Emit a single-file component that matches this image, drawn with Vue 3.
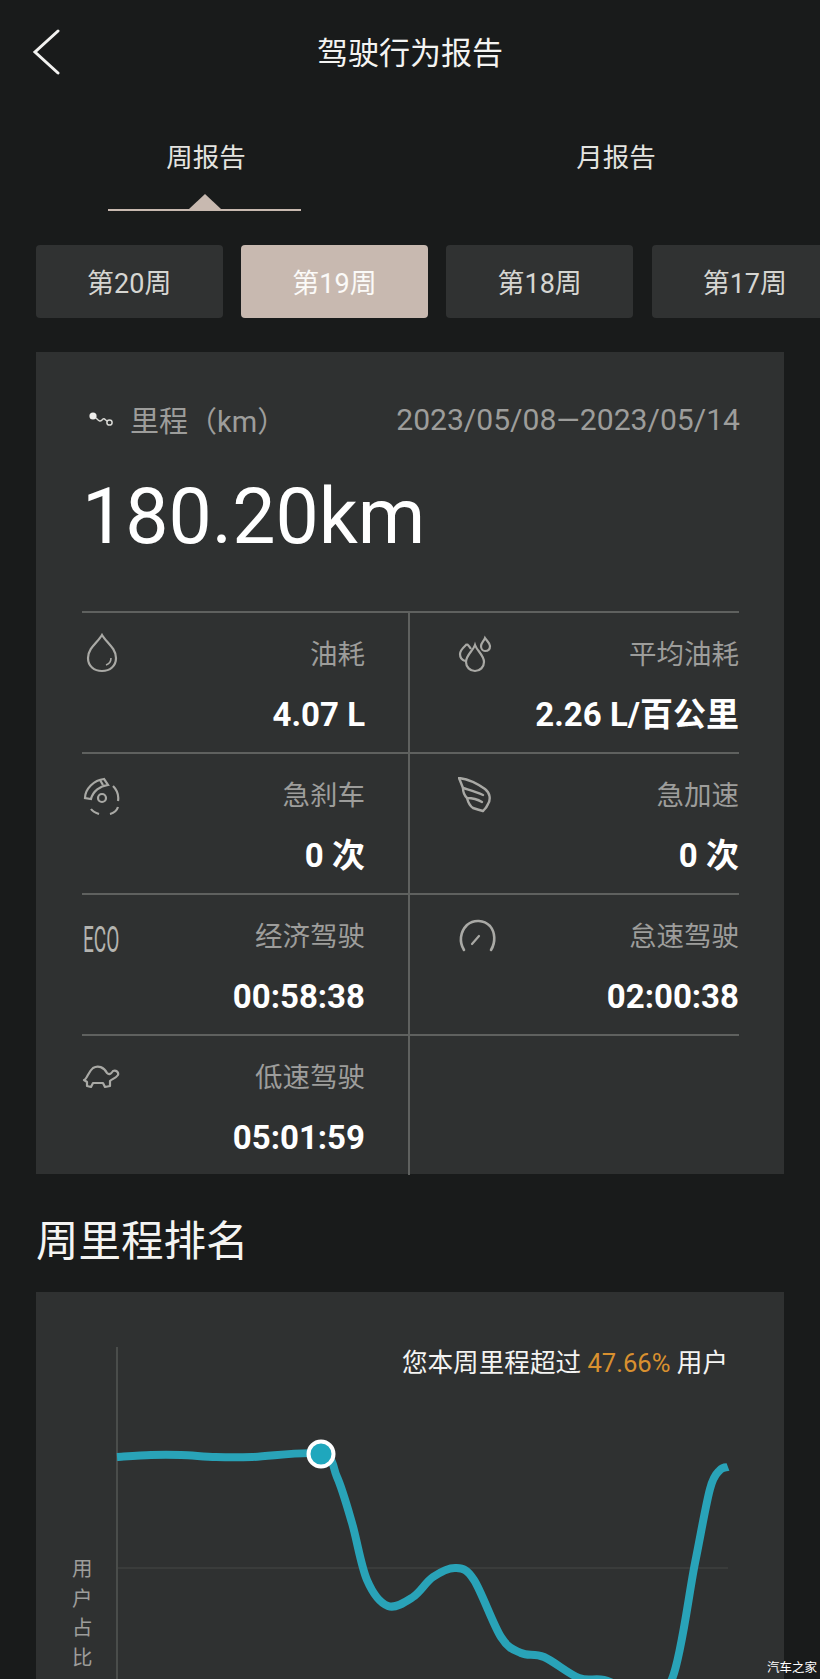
<template>
  <div class="page">
    <header class="top-bar">
      <svg class="back" width="28" height="46" viewBox="0 0 28 46">
        <path d="M26 2 L3 23 L26 44" fill="none" stroke="#f2f2f0" stroke-width="3" stroke-linecap="round" stroke-linejoin="miter" />
      </svg>
      <h1 class="title">驾驶行为报告</h1>
    </header>

    <nav class="tabs">
      <div class="tab active"><span>周报告</span></div>
      <div class="tab"><span>月报告</span></div>
    </nav>

    <div class="weeks">
      <div v-for="w in weeks" :key="w" class="week" :class="{ current: w === 19 }">第{{ w }}周</div>
    </div>

    <section class="card summary">
      <div class="summary-head">
        <div class="summary-label">
          <svg width="24" height="15" viewBox="0 0 24 15" class="route">
            <circle cx="4" cy="4" r="3.6" fill="#eeeeec" />
            <path d="M7 6 C10 9 11 10 13 8 C15 5 16 8 18 9" fill="none" stroke="#d8d8d4" stroke-width="1.5" />
            <circle cx="20.5" cy="10.5" r="2.6" fill="none" stroke="#d8d8d4" stroke-width="1.5" />
          </svg>
          <span>里程（km）</span>
        </div>
        <span class="date">2023/05/08—2023/05/14</span>
      </div>
      <div class="distance">180.20km</div>

      <div class="stats">
        <div v-for="s in stats" :key="s.label" class="stat">
          <div class="stat-icon" :class="'icon-' + s.icon">
            <span v-if="s.icon === 'eco'" class="eco">ECO</span>
            <svg v-else-if="s.icon === 'drop'" width="36" height="40" viewBox="0 0 36 40" fill="none" stroke="#a9a9a5" stroke-width="2.2">
              <path d="M18 2 C14 9 4 15 4 25 C4 33 10 38 18 38 C26 38 32 33 32 25 C32 15 22 9 18 2 Z" />
              <path d="M27 25 C27 28 25 31 22 32" stroke-width="1.6" />
            </svg>
            <svg v-else-if="s.icon === 'drops'" width="36" height="40" viewBox="0 0 36 40" fill="none" stroke="#a9a9a5" stroke-width="2.2">
              <path d="M17 12 C15 18 8 22 8 29 C8 34 12 38 17 38 C22 38 26 34 26 29 C26 22 19 18 17 12 Z" />
              <path d="M9 11 C6 14 2 17 2 21 C2 25 4 27 7 28 M9 11 C11 13 12 14 13 16" />
              <path d="M27 5 C26 8 23 10 23 13 C23 16 25 18 27 18 C30 18 32 16 32 13 C32 10 29 8 27 5 Z" />
            </svg>
            <svg v-else-if="s.icon === 'brake'" width="38" height="38" viewBox="0 0 38 38" fill="none" stroke="#a9a9a5" stroke-width="2.2">
              <circle cx="20" cy="21" r="4" />
              <path d="M9 32 C11 35 14 36 17 37" />
              <path d="M28 37 C32 36 35 33 36 30" />
              <path d="M36 24 C37 18 35 13 31 9" />
              <path d="M3 21 C3 12 12 3 22 2 L26 8 C18 9 11 14 9 22 Z" />
              <path d="M18 3 L21 8" />
            </svg>
            <svg v-else-if="s.icon === 'wing'" width="36" height="38" viewBox="0 0 36 38" fill="none" stroke="#a9a9a5" stroke-width="2.4" stroke-linejoin="round" stroke-linecap="round">
              <path d="M1 1 C10 2 20 7 27 12 C32 16 33 22 30 27 C29 30 27 32 25 34" />
              <path d="M1 1 L5 11 C11 13 18 15 25 18" />
              <path d="M5 11 C5 15 7 19 9 21 C14 21 19 22 24 25" />
              <path d="M9 21 C10 25 12 29 15 31 C18 32 21 33 25 34" />
            </svg>
            <svg v-else-if="s.icon === 'gauge'" width="38" height="34" viewBox="0 0 38 34" fill="none" stroke="#a9a9a5" stroke-width="2.6" stroke-linecap="round">
              <path d="M6 32 C1 24 2 14 9 7 C16 1 26 2 32 8 C37 14 38 24 33 32" />
              <path d="M14 26 L21 18" stroke-width="2.2" />
            </svg>
            <svg v-else-if="s.icon === 'turtle'" width="38" height="24" viewBox="0 0 38 24" fill="none" stroke="#a9a9a5" stroke-width="2.2" stroke-linejoin="round">
              <path d="M2 15 C5 14 6 7 11 3 C16 0 22 2 25 8 C27 10 29 9 31 6 C34 5 37 7 36 10 C34 13 30 14 28 16 L28 21 L23 22 L21 18 L11 18 L9 22 L5 21 L5 17 Z" />
            </svg>
          </div>
          <div class="stat-text">
            <div class="stat-label">{{ s.label }}</div>
            <div class="stat-value">{{ s.value }}</div>
          </div>
        </div>
        <div class="stat"></div>
      </div>
    </section>

    <h2 class="section-title">周里程排名</h2>

    <section class="card rank">
      <svg class="rank-chart" width="748" height="387" viewBox="0 0 748 387">
        <line x1="81" y1="55" x2="81" y2="387" stroke="#555755" stroke-width="1.5" />
        <line x1="82" y1="276" x2="692" y2="276" stroke="#474947" stroke-width="1" />
        <path :d="curve" fill="none" stroke="#29a3b8" stroke-width="8" stroke-linecap="butt" />
        <circle cx="285" cy="162" r="12.5" fill="#1fa7bd" stroke="#fff" stroke-width="4" />
      </svg>
      <p class="rank-note">您本周里程超过 <em>47.66%</em> 用户</p>
      <div class="rank-axis">
        <span v-for="c in '用户占比'" :key="c">{{ c }}</span>
      </div>
    </section>

    <span class="watermark">汽车之家</span>
  </div>
</template>

<script setup>
import { computed } from 'vue';

const weeks = [20, 19, 18, 17];

const stats = [
  { icon: 'drop', label: '油耗', value: '4.07 L' },
  { icon: 'drops', label: '平均油耗', value: '2.26 L/百公里' },
  { icon: 'brake', label: '急刹车', value: '0 次' },
  { icon: 'wing', label: '急加速', value: '0 次' },
  { icon: 'eco', label: '经济驾驶', value: '00:58:38' },
  { icon: 'gauge', label: '怠速驾驶', value: '02:00:38' },
  { icon: 'turtle', label: '低速驾驶', value: '05:01:59' }
];

// 排名曲线的取样点
const points = [
  [81, 165], [115, 163], [145, 163], [180, 165], [216, 165], [285, 162],
  [301, 185], [316, 231], [331, 288], [352, 314], [377, 305], [397, 285],
  [420, 276], [438, 288], [465, 345], [485, 361], [508, 365], [543, 386], [568, 388],
  [604, 400], [636, 387], [659, 271], [674, 197], [684, 178], [692, 175]
];

// Catmull-Rom 转贝塞尔
const curve = computed(() => {
  let d = `M${points[0][0]} ${points[0][1]}`;
  for (let i = 0; i < points.length - 1; i++) {
    const p0 = points[i - 1] || points[i];
    const p1 = points[i];
    const p2 = points[i + 1];
    const p3 = points[i + 2] || p2;
    const c1x = p1[0] + (p2[0] - p0[0]) / 6;
    const c1y = p1[1] + (p2[1] - p0[1]) / 6;
    const c2x = p2[0] - (p3[0] - p1[0]) / 6;
    const c2y = p2[1] - (p3[1] - p1[1]) / 6;
    d += ` C${c1x} ${c1y} ${c2x} ${c2y} ${p2[0]} ${p2[1]}`;
  }
  return d;
});
</script>

<style>
html,
body {
  background: #191b1b;
}
</style>

<style scoped>
.page {
  position: relative;
  width: 820px;
  height: 1679px;
  overflow: hidden;
  background: #191b1b;
  color: #f4f4f2;
  font-family: Roboto, "Noto Sans CJK SC", sans-serif;
}

.top-bar {
  position: relative;
  height: 104px;
  display: flex;
  align-items: center;
  justify-content: center;
}

.back {
  position: absolute;
  left: 32px;
  top: 29px;
}

.title {
  margin: 4px 0 0;
  font-size: 31px;
  font-weight: 400;
  line-height: 44px;
}

.tabs {
  display: grid;
  grid-template-columns: 1fr 1fr;
  height: 107px;
}

.tab {
  position: relative;
  display: flex;
  justify-content: center;
  padding-top: 33px;
  padding-left: 2px;
  font-size: 26.5px;
  line-height: 42px;
  color: #e4e4e0;
}

.tab.active::after {
  content: "";
  position: absolute;
  left: 108px;
  bottom: 0;
  width: 193px;
  height: 2.5px;
  background: #c8b9b0;
}

.tab.active::before {
  content: "";
  position: absolute;
  left: 189px;
  bottom: 2px;
  border-left: 16px solid transparent;
  border-right: 16px solid transparent;
  border-bottom: 15px solid #c8b9b0;
}

.weeks {
  display: flex;
  gap: 18.6px;
  margin-top: 34px;
  padding-left: 36px;
}

.week {
  flex: 0 0 186.6px;
  height: 73px;
  border-radius: 4px;
  background: #303232;
  color: #d6d6d2;
  font-size: 27px;
  line-height: 79px;
  text-align: center;
}

.week.current {
  background: #c8b9b0;
  color: #fbfaf8;
}

.card {
  width: 748px;
  margin-left: 36px;
  background: #2f3131;
}

.summary {
  margin-top: 34px;
  height: 822px;
  padding: 47px 44px 0 46px;
  box-sizing: border-box;
}

.summary-head {
  display: flex;
  align-items: center;
  justify-content: space-between;
  height: 40px;
  color: #9d9d9b;
}

.summary-label {
  display: flex;
  align-items: center;
  font-size: 29px;
  padding-left: 7px;
}

.route {
  margin-right: 17px;
}

.date {
  font-size: 30.1px;
}

.distance {
  margin-top: 33px;
  font-size: 77px;
  line-height: 90px;
  color: #fff;
}

.stats {
  display: grid;
  grid-template-columns: 326px 331px;
  grid-auto-rows: 141px;
  margin-top: 49px;
}

.stat {
  display: flex;
  justify-content: space-between;
  box-sizing: border-box;
  padding-right: 43px;
  border-top: 2px solid #5f615f;
}

.stat:nth-child(even) {
  border-left: 2px solid #5f615f;
  padding-right: 0;
  padding-left: 48px;
}

.stat-icon {
  padding-top: 20px;
  width: 40px;
}

.icon-drop {
  padding-left: 2px;
}

.icon-brake,
.icon-wing,
.icon-gauge {
  padding-top: 23px;
}

.icon-turtle {
  padding-top: 29px;
}

.eco {
  display: block;
  margin-top: 4px;
  margin-left: 1px;
  font-size: 36px;
  font-weight: 400;
  line-height: 42px;
  color: #b4b4b0;
  transform: scaleX(0.53);
  transform-origin: left center;
  white-space: nowrap;
}

.stat-text {
  padding-top: 25px;
  text-align: right;
}

.stat-label {
  font-size: 27.5px;
  line-height: 34px;
  color: #9d9d9b;
}

.stat-value {
  margin-top: 23px;
  font-size: 33px;
  font-weight: 700;
  line-height: 40px;
  color: #fff;
}

.section-title {
  margin: 41px 0 0 36px;
  font-size: 42.5px;
  font-weight: 400;
  line-height: 54px;
}

.rank {
  position: relative;
  margin-top: 23px;
  height: 387px;
}

.rank-chart {
  display: block;
}

.rank-note {
  position: absolute;
  top: 52px;
  right: 56px;
  margin: 0;
  font-size: 25.6px;
  line-height: 38px;
  white-space: nowrap;
}

.rank-note em {
  font-style: normal;
  color: #d8902f;
}

.rank-axis {
  position: absolute;
  left: 36px;
  top: 263px;
  display: flex;
  flex-direction: column;
  width: 20px;
  font-size: 20.5px;
  line-height: 29.5px;
  color: #9d9d9b;
}

.watermark {
  position: absolute;
  right: 3px;
  bottom: 3px;
  font-size: 12.5px;
  line-height: 16px;
  color: #fff;
}
</style>
